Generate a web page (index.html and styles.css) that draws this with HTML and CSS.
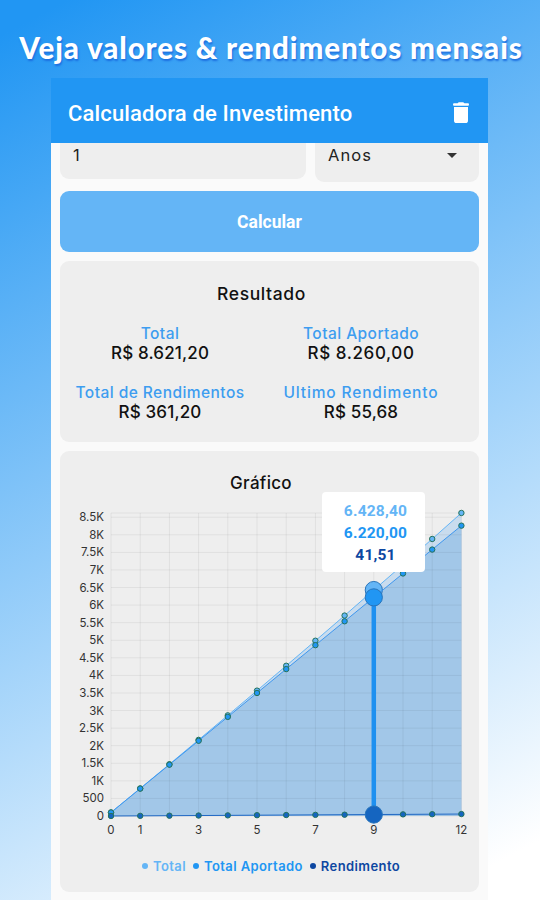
FILE: index.html
```html
<!DOCTYPE html>
<html lang="pt-BR">
<head>
    <meta charset="UTF-8">
    <meta name="viewport" content="width=device-width, initial-scale=1.0">
    <title>Calculadora de Investimento</title>
    <link rel="stylesheet" href="styles.css">
</head>
<body>
    <h1 class="headline">Veja valores &amp; rendimentos mensais</h1>
    <div class="phone">
        <!-- app bar -->
        <div class="appbar">
            <span class="appbar-title">Calculadora de Investimento</span>
            <svg class="trash" width="16" height="22" viewBox="0 0 16 22">
                <path d="M1 1.300h3.600Q5.200.3 6.200.3h3.600q1 0 1.600 1H15q1 0 1 1.200t-1 1.200H1q-1 0-1-1.200T1 1.300zM1 5h14v13.400a2.600 2.600 0 0 1-2.600 2.600H3.600A2.600 2.600 0 0 1 1 18.400z"/>
            </svg>
        </div>
        <div class="content">
            <div class="fields">
                <div class="field field-number">1</div>
                <div class="field field-select">Anos <span class="arrow"></span></div>
            </div>
            <div class="button">Calcular</div>
            <!-- resultado -->
            <div class="card result">
                <h2 class="card-title">Resultado</h2>
                <div class="values">
                    <div class="value"><span class="label">Total</span><span class="money">R$ 8.621,20</span></div>
                    <div class="value"><span class="label">Total Aportado</span><span class="money wide">R$ 8.260,00</span></div>
                    <div class="value"><span class="label">Total de Rendimentos</span><span class="money">R$ 361,20</span></div>
                    <div class="value"><span class="label label-wide">Ultimo Rendimento</span><span class="money">R$ 55,68</span></div>
                </div>
            </div>
            <!-- grafico -->
            <div class="card graph">
                <h2 class="card-title">Gráfico</h2>
                <svg class="chart" id="chart" width="419" height="340" viewBox="60 500 419 340"></svg>
                <div class="tooltip">
                    <span class="c-total">6.428,40</span>
                    <span class="c-aportado">6.220,00</span>
                    <span class="c-rend">41,51</span>
                </div>
                <div class="legend">
                    <span class="item c-total">Total</span>
                    <span class="item c-aportado">Total Aportado</span>
                    <span class="item c-rend">Rendimento</span>
                </div>
            </div>
        </div>
    </div>
    <script>
        var chart = document.getElementById("chart");
        var x0 = 111, y0 = 816, stepX = 29.2, scaleY = 0.03515;
        var top0 = 513, right = 461.4;
        var aportado = [], total = [], rend = [], soma = 0;

        for (var m = 0; m <= 12; m++) {
            var r = m == 0 ? 0 : 41.51 + (m - 9) * 4.7;
            soma += r;
            rend.push(r);
            aportado.push(100 + 680 * m);
            total.push(100 + 680 * m + soma);
        }
        total[9] = 6428.4;
        total[12] = 8621.2;

        function px(m) { return x0 + m * stepX; }
        function py(v) { return y0 - v * scaleY; }
        function add(name, attrs, text) {
            var el = document.createElementNS("http://www.w3.org/2000/svg", name);
            for (var k in attrs) el.setAttribute(k, attrs[k]);
            if (text) el.textContent = text;
            chart.appendChild(el);
        }
        function points(serie) {
            return serie.map(function (v, m) { return px(m) + "," + py(v); }).join(" ");
        }

        // areas
        add("polygon", { "class": "area-total", points: points(total) + " " + right + "," + y0 + " " + x0 + "," + y0 });
        add("polygon", { "class": "area-aportado", points: points(aportado) + " " + right + "," + y0 + " " + x0 + "," + y0 });

        // grid and axis labels
        for (var v = 0; v <= 8500; v += 500) {
            add("line", { "class": "grid", x1: x0, x2: right, y1: py(v), y2: py(v) });
            add("text", { "class": "ylabel", x: 104, y: py(v) + 4 }, v < 1000 ? String(v) : v / 1000 + "K");
        }
        add("line", { "class": "grid", x1: x0, x2: right, y1: top0, y2: top0 });
        for (var i = 0; i <= 12; i++) {
            add("line", { "class": "grid", x1: px(i), x2: px(i), y1: top0, y2: y0 });
        }
        [0, 1, 3, 5, 7, 9, 12].forEach(function (m) {
            add("text", { "class": "xlabel", x: px(m), y: 834 }, String(m));
        });

        // selected month
        add("line", { "class": "cursor", x1: px(9), x2: px(9), y1: py(6220), y2: y0 });

        // lines and dots
        [["total", total], ["aportado", aportado], ["rend", rend]].forEach(function (s) {
            add("polyline", { "class": "line line-" + s[0], points: points(s[1]) });
            s[1].forEach(function (v, m) {
                add("circle", { "class": "dot dot-" + s[0] + (m == 9 ? " big" : ""), cx: px(m), cy: py(v), r: m == 9 ? 8.6 : 2.7 });
            });
        });
    </script>
</body>
</html>
```
FILE: styles.css
```css
body {
    margin: 0;
    width: 540px;
    height: 900px;
    overflow: hidden;
    background: linear-gradient(152deg, #2196f3 3%, #ffffff 95%);
    font-family: "Inter", "Liberation Sans", sans-serif;
}
.headline {
    margin: 0;
    height: 78px;
    padding-left: 2px;
    line-height: 96px;
    text-align: center;
    color: #fff;
    font-family: "Lato", sans-serif;
    font-size: 29.5px;
    font-weight: 900;
    letter-spacing: 0.9px;
    white-space: nowrap;
    text-shadow: 1px 2px 2px #1c6fe0;
}
.phone {
    width: 437px;
    height: 822px;
    margin-left: 51px;
    background: #fafafa;
}
.appbar {
    display: flex;
    justify-content: space-between;
    align-items: center;
    height: 65px;
    padding: 5px 19px 0 17px;
    box-sizing: border-box;
    background: #2196f3;
    color: #fff;
}
.appbar-title {
    font-family: "Roboto", sans-serif;
    font-size: 22px;
    font-weight: 500;
    letter-spacing: 0.15px;
}
.trash {
    fill: #fff;
}
.content {
    padding: 0 9px;
}
.fields {
    display: flex;
    align-items: flex-start;
    gap: 9px;
    height: 48px;
}
.field {
    box-sizing: border-box;
    padding-left: 13px;
    background: #eee;
    border-radius: 0 0 9px 9px;
    color: #222;
    font-size: 16.5px;
    line-height: 24px;
}
.field-number {
    width: 246px;
    height: 36px;
}
.field-select {
    display: flex;
    justify-content: space-between;
    width: 164px;
    height: 39px;
    padding-right: 22px;
    letter-spacing: 1.1px;
}
.arrow {
    width: 0;
    height: 0;
    margin-top: 10px;
    border-top: 5px solid #333;
    border-left: 5px solid transparent;
    border-right: 5px solid transparent;
}
.button {
    height: 61px;
    line-height: 62px;
    border-radius: 9px;
    background: #64b5f6;
    color: #fff;
    text-align: center;
    font-family: "Roboto", sans-serif;
    font-size: 17.5px;
    font-weight: 700;
}
.card {
    position: relative;
    margin-top: 9px;
    background: #eee;
    border-radius: 9px;
}
.card-title {
    margin: 0;
    padding-right: 16px;
    text-align: center;
    font-size: 17.5px;
    font-weight: 500;
    letter-spacing: 0.6px;
    line-height: 22px;
    color: #111;
}
.graph .card-title {
    padding-right: 17px;
    font-size: 17px;
    letter-spacing: 0.3px;
    line-height: 23px;
}
.result {
    height: 181px;
    box-sizing: border-box;
    padding: 22px 0 0;
}
.values {
    display: grid;
    grid-template-columns: 186px 216px;
    row-gap: 21px;
    margin: 19px 7px 0;
}
.value {
    display: flex;
    flex-direction: column;
    align-items: center;
    line-height: 19px;
    white-space: nowrap;
}
.label {
    color: #3d9df0;
    font-size: 15.5px;
    font-weight: 500;
    letter-spacing: 0.45px;
}
.label-wide {
    letter-spacing: 0.85px;
}
.money {
    color: #111;
    font-size: 17px;
    font-weight: 500;
    line-height: 20px;
    margin-bottom: -1px;
    letter-spacing: 0.15px;
}
.wide {
    letter-spacing: 0.6px;
}
.graph {
    height: 441px;
    box-sizing: border-box;
    padding-top: 21px;
}
.chart {
    display: block;
    margin-top: 5px;
}
.chart text {
    fill: #333;
    font-size: 11.5px;
}
.ylabel {
    text-anchor: end;
}
.xlabel {
    text-anchor: middle;
}
.area-total {
    fill: #c9dcee;
}
.area-aportado {
    fill: #a2c7e8;
}
.grid {
    stroke: #000;
    stroke-opacity: 0.06;
}
.cursor {
    stroke: #1e90f0;
    stroke-width: 4.5;
}
.line {
    fill: none;
    stroke-width: 1;
}
.line-total {
    stroke: #64b5f6;
}
.line-aportado {
    stroke: #3f97ee;
}
.line-rend {
    stroke: #2068c4;
}
.dot {
    stroke: #24725c;
    stroke-width: 1;
}
.dot-total {
    fill: #64b5f6;
}
.dot-aportado {
    fill: #2196f3;
}
.dot-rend {
    fill: #1565c0;
}
.big {
    stroke: #2874bb;
}
/* values of the selected month */
.tooltip {
    position: absolute;
    left: 262px;
    top: 41px;
    width: 103px;
    height: 80px;
    box-sizing: border-box;
    padding: 8px 0 0 4px;
    display: flex;
    flex-direction: column;
    align-items: center;
    background: #fff;
    border-radius: 4px;
    font-family: "Roboto", sans-serif;
    font-size: 15.5px;
    font-weight: 700;
    line-height: 22px;
    letter-spacing: 0.2px;
}
.c-total {
    color: #64b5f6;
}
.c-aportado {
    color: #2196f3;
}
.c-rend {
    color: #0d47a1;
}
.legend {
    display: flex;
    justify-content: center;
    gap: 7px;
    margin-top: 16px;
    padding-left: 3px;
    font-size: 13px;
    font-weight: 600;
    line-height: 20px;
    letter-spacing: 0.4px;
}
.item {
    display: flex;
    align-items: center;
    gap: 5px;
}
.item::before {
    content: "";
    width: 6px;
    height: 6px;
    border-radius: 50%;
    background: currentColor;
}
```
